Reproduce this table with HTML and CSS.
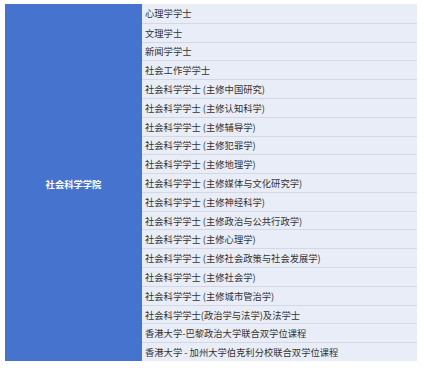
FILE: index.html
```
<!DOCTYPE html>
<html lang="zh">
<head>
<meta charset="utf-8">
<link rel="stylesheet" href="styles.css">
</head>
<body>
<div class="table">
  <div class="faculty">社会科学学院</div>
  <div class="list">
    <div class="row">心理学学士</div>
    <div class="row">文理学士</div>
    <div class="row">新闻学学士</div>
    <div class="row">社会工作学学士</div>
    <div class="row">社会科学学士 (主修中国研究)</div>
    <div class="row">社会科学学士 (主修认知科学)</div>
    <div class="row">社会科学学士 (主修辅导学)</div>
    <div class="row">社会科学学士 (主修犯罪学)</div>
    <div class="row">社会科学学士 (主修地理学)</div>
    <div class="row">社会科学学士 (主修媒体与文化研究学)</div>
    <div class="row">社会科学学士 (主修神经科学)</div>
    <div class="row">社会科学学士 (主修政治与公共行政学)</div>
    <div class="row">社会科学学士 (主修心理学)</div>
    <div class="row">社会科学学士 (主修社会政策与社会发展学)</div>
    <div class="row">社会科学学士 (主修社会学)</div>
    <div class="row">社会科学学士 (主修城市管治学)</div>
    <div class="row">社会科学学士(政治学与法学)及法学士</div>
    <div class="row">香港大学-巴黎政治大学联合双学位课程</div>
    <div class="row">香港大学 - 加州大学伯克利分校联合双学位课程</div>
  </div>
</div>
</body>
</html>
```
FILE: styles.css
```
html, body {
  margin: 0;
  padding: 0;
  background: #ffffff;
}
body {
  padding: 4px 0 0 5px;
  font-family: "Noto Sans CJK SC", "Noto Sans", sans-serif;
}
.table {
  display: grid;
  grid-template-columns: 137px 275px;
  height: 357px;
  width: 412px;
}
.faculty {
  background: #4673cd;
  color: #ffffff;
  font-size: 9.3px;
  font-weight: bold;
  display: flex;
  align-items: center;
  justify-content: center;
  padding-top: 3px;
}
.list {
  display: grid;
  grid-template-rows: repeat(19, 1fr);
  background: #e9edf8;
}
.row {
  display: flex;
  align-items: center;
  padding-left: 3px;
  font-size: 9.3px;
  color: #333333;
  border-top: 1px solid #d3d8e4;
  white-space: nowrap;
}
.row:first-child {
  border-top: none;
}
```
